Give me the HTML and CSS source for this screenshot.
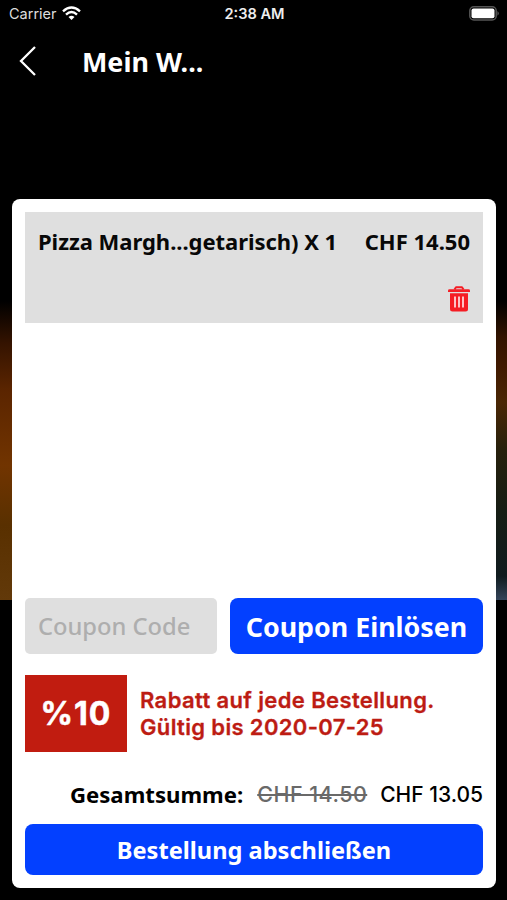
FILE: index.html
```
<!DOCTYPE html>
<html lang="de">
<head>
<meta charset="utf-8">
<title>Mein Warenkorb</title>
<link rel="stylesheet" href="styles.css">
</head>
<body>
<div class="screen">
  <header class="status">
    <div class="carrier"><span>Carrier</span>
      <svg class="wifi" width="19" height="14" viewBox="0 0 19 14" fill="none" stroke="#fff" stroke-width="2.4"><path d="M1 5.3Q9.5-2.2 18 5.3M4 8.7Q9.5 3.5 15 8.7"/><path d="M6.5 11Q9.5 8.3 12.5 11L9.5 14Z" fill="#fff" stroke="none"/></svg>
    </div>
    <time class="clock">2:38 AM</time>
    <svg class="battery" width="31" height="15" viewBox="0 0 31 15"><rect x=".8" y=".8" width="26.4" height="13.2" rx="4" fill="#000" stroke="#555" stroke-width="1.5"/><rect x="2.5" y="2.5" width="23" height="9.8" rx="2" fill="#fff"/><path d="M28.5 5Q31 7.4 28.5 9.8Z" fill="#666"/></svg>
  </header>
  <nav class="nav">
    <svg width="18" height="32" viewBox="0 0 18 32" fill="none" stroke="#fff" stroke-width="2.3"><path d="M16 2 2 16 16 30"/></svg>
    <h1 class="title">Mein W...</h1>
  </nav>
  <main class="card">
    <section class="item">
      <div class="item-line"><span class="item-name">Pizza Margh...getarisch) X 1</span><span class="item-price">CHF 14.50</span></div>
      <svg class="trash" width="22" height="26" viewBox="0 0 22 26"><path d="M6.5 3.5 8 1.2H14L15.5 3.5" fill="none" stroke="#f51d24" stroke-width="2" stroke-linejoin="round"/><path d="M0 6V4.6Q0 3.2 1.5 3.2H20.5Q22 3.2 22 4.6V6Z" fill="#f51d24"/><path d="M2 7.3H20V23Q20 25.5 17.5 25.5H4.5Q2 25.5 2 23Z" fill="#f51d24"/><path d="M7 10.5V21.5M11 10.5V21.5M15 10.5V21.5" stroke="#ffd5d7" stroke-width="1.8"/></svg>
    </section>
    <section class="coupon">
      <div class="code"><span>Coupon Code</span></div>
      <button class="button redeem"><span>Coupon Einlösen</span></button>
    </section>
    <section class="discount">
      <div class="percent"><span>%10</span></div>
      <p class="offer"><span class="offer-a">Rabatt auf jede Bestellung.</span><br><span class="offer-b">Gültig bis 2020-07-25</span></p>
    </section>
    <section class="total"><span class="total-label">Gesamtsumme:</span><span class="old">CHF 14.50</span><span class="new">CHF 13.05</span></section>
    <button class="button checkout"><span>Bestellung abschließen</span></button>
  </main>
</div>
</body>
</html>
```
FILE: styles.css
```
* { box-sizing: border-box; }
body { margin: 0; background: #000; }
.screen {
  width: 507px; height: 900px; overflow: hidden;
  display: flex; flex-direction: column;
  font-family: "Noto Sans", sans-serif; font-weight: 700; white-space: nowrap;
  background:
    linear-gradient(#000, #341300 14%, #5b2500 30%, #713400 55%, #593000 75%, #623909) 0 301px / 12px 299px no-repeat,
    linear-gradient(#000, #321300 12%, #401900 22%, #4a2705 34%, #26200c 50%, #161d14 70%, #101b1e 92%, #34445a) 496px 301px / 11px 299px no-repeat,
    #000;
}
.status {
  height: 28px; padding: 0 7px 1px 9px;
  display: grid; grid-template-columns: 1fr auto 1fr; align-items: center;
  font-family: Inter, sans-serif; color: #fff;
}
.carrier { display: flex; align-items: center; gap: 6px; font-weight: 400; font-size: 14.5px; color: #ddd; }
.wifi { margin: -2px 0 0 -1px; }
.clock { font-weight: 600; font-size: 14.6px; color: #eee; }
.battery { justify-self: end; }
.nav { height: 171px; padding: 17px 0 0 19px; display: flex; align-items: flex-start; gap: 45px; color: #fff; }
.title { margin: 0; font-size: 26.9px; line-height: 34px; }
.card { width: 484px; height: 689px; margin-left: 12px; padding: 13px; border-radius: 8px; background: #fff; display: flex; flex-direction: column; }
.item { height: 111px; margin-bottom: 275px; padding: 14px 13px 11px; background: #dfdfdf; display: flex; flex-direction: column; justify-content: space-between; align-items: flex-end; }
.item-line { width: 100%; display: flex; justify-content: space-between; font-size: 22px; line-height: 30px; color: #080808; }
.item-name { letter-spacing: -.04px; }
.coupon { height: 56px; display: flex; gap: 13px; }
.code { width: 192px; padding-left: 13px; border-radius: 5px; background: #dfdfdf; display: flex; align-items: center; color: #aeaeae; font-weight: 500; font-size: 23.7px; }
.button { padding: 0; border: 0; border-radius: 8px; background: #0340ff; color: #fff; font: inherit; text-align: center; }
.redeem { flex: 1; font-size: 26.8px; }
.discount { height: 77px; margin-top: 21px; display: flex; align-items: center; gap: 13px; font-family: Inter, sans-serif; color: #bd1c13; }
.percent { width: 102px; height: 77px; background: #c11c10; color: #fff; display: flex; align-items: center; justify-content: center; font-size: 32px; letter-spacing: 1px; -webkit-text-stroke: .5px #fff; }
.offer { margin: 0; font-weight: 600; font-size: 22px; line-height: 26.5px; -webkit-text-stroke: .3px #bd1c13; }
.offer-a { letter-spacing: .38px; }
.offer-b { letter-spacing: .35px; }
.total { height: 34px; margin-top: 25px; display: flex; align-items: center; justify-content: flex-end; font-size: 22.2px; }
.old, .new { font-family: Inter, sans-serif; font-weight: 500; font-size: 21px; }
.old { margin: 0 13px 0 14px; font-size: 21.5px; letter-spacing: .45px; color: #696969; text-decoration: line-through; text-decoration-thickness: 2px; }
.checkout { height: 51px; margin-top: 13px; font-size: 23.6px; flex: none; }
```
